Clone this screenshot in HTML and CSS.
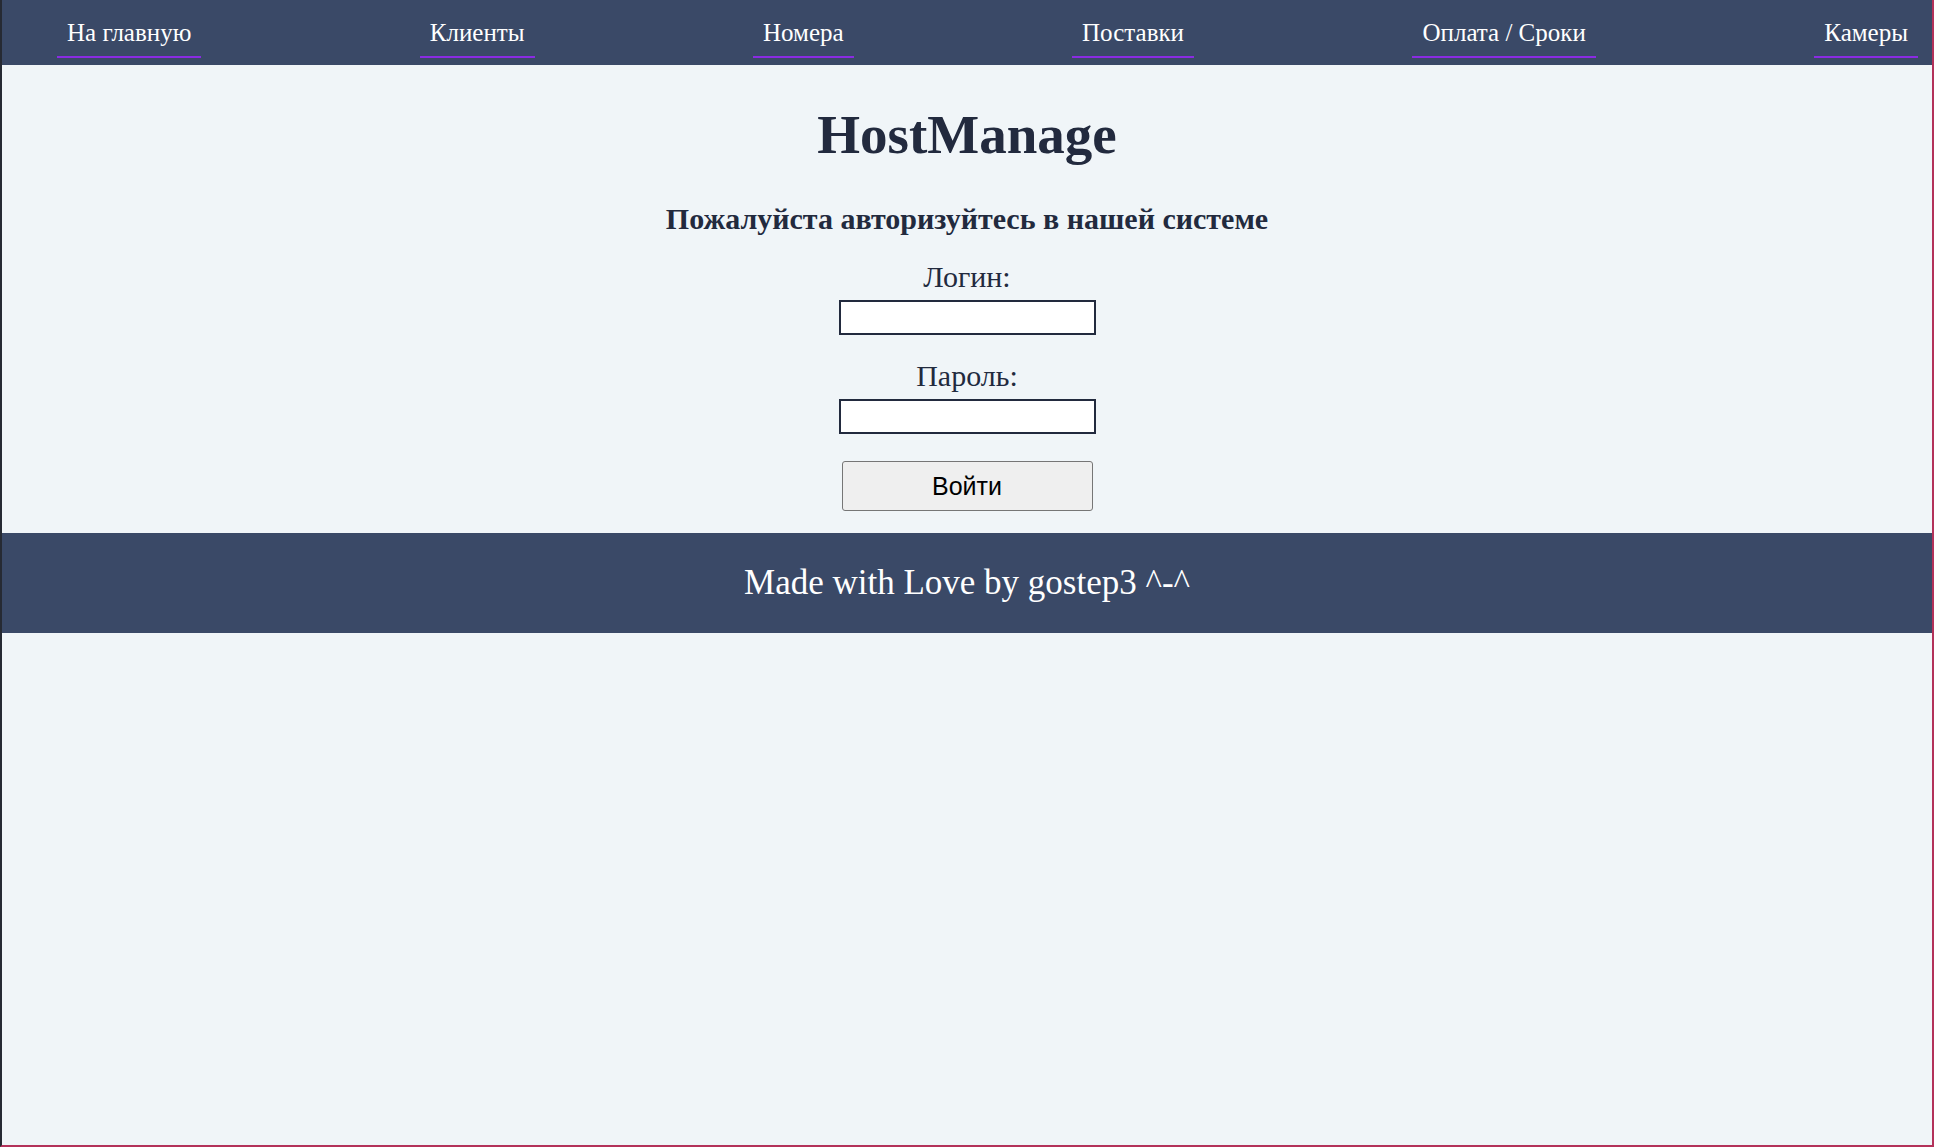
FILE: index.html
```html
<!DOCTYPE html>
<html lang="ru">
<head>
<meta charset="utf-8">
<title>HostManage</title>
<link rel="stylesheet" href="styles.css">
</head>
<body>
<nav class="topnav">
  <a class="nav-link" href="#">На главную</a>
  <a class="nav-link" href="#">Клиенты</a>
  <a class="nav-link" href="#">Номера</a>
  <a class="nav-link" href="#">Поставки</a>
  <a class="nav-link" href="#">Оплата / Сроки</a>
  <a class="nav-link" href="#">Камеры</a>
</nav>
<main class="content">
  <h1 class="title">HostManage</h1>
  <h2 class="subtitle">Пожалуйста авторизуйтесь в нашей системе</h2>
  <form class="login-form">
    <label class="field-label" for="login">Логин:</label>
    <input class="field-input" id="login" type="text">
    <label class="field-label second" for="password">Пароль:</label>
    <input class="field-input" id="password" type="password">
    <button class="submit-btn" type="button">Войти</button>
  </form>
</main>
<footer class="footer">Made with Love by gostep3 ^-^</footer>
</body>
</html>
```

FILE: styles.css
```css
html, body {
  margin: 0;
  padding: 0;
}
body {
  min-height: 100vh;
  box-sizing: border-box;
  background: #f0f5f8;
  border-left: 2px solid #262a33;
  border-right: 2px solid #b3325a;
  border-bottom: 2px solid #b3325a;
  font-family: "Liberation Serif", "Times New Roman", serif;
  color: #222a3e;
}
.topnav {
  height: 65px;
  background: #3a4967;
  display: flex;
  justify-content: space-between;
  align-items: flex-start;
  padding: 0 14px 0 55px;
  box-sizing: border-box;
}
.nav-link {
  display: block;
  margin-top: 19px;
  padding: 0 10px 10px;
  font-size: 25px;
  line-height: 27px;
  color: #ffffff;
  text-decoration: none;
  border-bottom: 2px solid #8a2be2;
}
.content {
  display: flex;
  flex-direction: column;
  align-items: center;
}
.title {
  margin: 38px 0 0;
  font-size: 55px;
  line-height: 64px;
  font-weight: bold;
  color: #222a3e;
}
.subtitle {
  margin: 36px 0 0;
  font-size: 30px;
  line-height: 32px;
  font-weight: bold;
}
.login-form {
  display: flex;
  flex-direction: column;
  align-items: center;
  margin-top: 26px;
}
.field-label {
  font-size: 30px;
  line-height: 32px;
  color: #222a3e;
}
.field-label.second {
  margin-top: 25px;
}
.field-input {
  margin-top: 7px;
  width: 257px;
  height: 35px;
  box-sizing: border-box;
  border: 2px solid #222a3e;
  background: #ffffff;
  padding: 0 4px;
}
.submit-btn {
  margin-top: 27px;
  width: 251px;
  height: 50px;
  box-sizing: border-box;
  background: #efefef;
  border: 1px solid #767676;
  border-radius: 3px;
  font-family: "Liberation Sans", Arial, sans-serif;
  font-size: 25px;
  color: #000;
}
.footer {
  margin-top: 22px;
  height: 100px;
  background: #3a4967;
  color: #ffffff;
  display: flex;
  align-items: center;
  justify-content: center;
  font-size: 35px;
}
```
